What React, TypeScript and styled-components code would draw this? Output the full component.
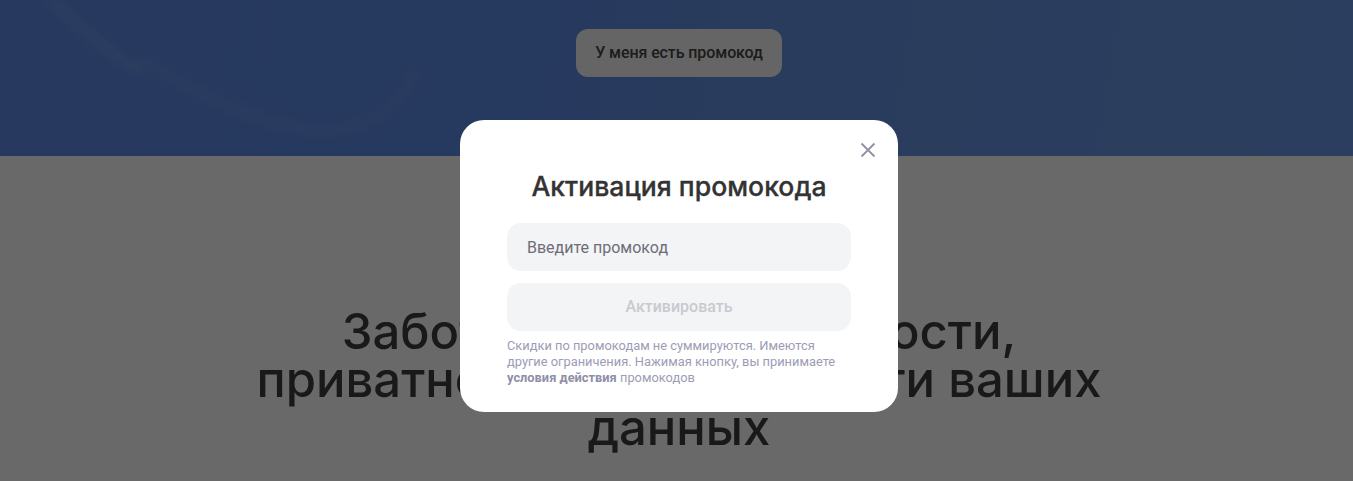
import styled, { createGlobalStyle } from "styled-components";

const GlobalStyle = createGlobalStyle`
  html, body {
    margin: 0;
    padding: 0;
    height: 100%;
    overflow: hidden;
    background: #ffffff;
  }
  * {
    box-sizing: border-box;
  }
`;

const Page = styled.div`
  position: relative;
  height: 481px;
  overflow: hidden;
  font-family: "Inter", "Noto Sans", sans-serif;
`;

const Hero = styled.section`
  position: relative;
  height: 156px;
  padding: 29px 0 0 5px;
  display: flex;
  justify-content: center;
  align-items: flex-start;
  background: linear-gradient(100deg, #5f8ce6 0%, #5e8ae4 40%, #6692e2 55%, #6b98e6 100%);
  overflow: hidden;
`;

const HeroWaves = styled.svg`
  position: absolute;
  left: 0;
  top: 0;
  width: 100%;
  height: 100%;
`;

const PromoButton = styled.button`
  position: relative;
  width: 206px;
  height: 48px;
  padding-bottom: 2px;
  border: 0;
  border-radius: 12px;
  background: #f6f6f6;
  color: #444444;
  font-family: "Roboto", sans-serif;
  font-size: 16px;
  font-weight: 500;
  letter-spacing: -0.1px;
`;

const Main = styled.main`
  display: flex;
  justify-content: center;
  padding: 152px 0 0 5px;
`;

const Heading = styled.h1`
  width: 900px;
  margin: 0;
  text-align: center;
  color: #3e3e3e;
  font-size: 49px;
  font-weight: 500;
  line-height: 48px;
`;

const Overlay = styled.div`
  position: absolute;
  inset: 0;
  background: rgba(0, 0, 0, 0.59);
`;

const Modal = styled.div`
  position: absolute;
  left: 460px;
  top: 120px;
  width: 438px;
  height: 292px;
  padding: 48px 47px 0;
  display: flex;
  flex-direction: column;
  border-radius: 24px;
  background: #ffffff;
`;

const CloseButton = styled.button`
  position: absolute;
  right: 21px;
  top: 21px;
  width: 18px;
  height: 18px;
  padding: 0;
  border: 0;
  background: none;
  color: #9191a5;
`;

const Title = styled.h2`
  margin: 0 0 19px;
  text-align: center;
  color: #333333;
  font-size: 26.6px;
  font-weight: 500;
  line-height: 36px;
  -webkit-text-stroke: 0.3px #333333;
`;

const PromoInput = styled.input`
  height: 48px;
  padding: 0 20px;
  border: 0;
  border-radius: 14px;
  outline: none;
  background: #f3f4f6;
  font-family: "Roboto", sans-serif;
  font-size: 16px;

  &::placeholder {
    color: #6d6d78;
    opacity: 1;
  }
`;

const ActivateButton = styled.button`
  height: 48px;
  margin-top: 12px;
  padding-bottom: 3px;
  border: 0;
  border-radius: 14px;
  background: #f3f4f6;
  color: #c8cacf;
  font-family: "Roboto", sans-serif;
  font-size: 16px;
  font-weight: 500;
`;

const Note = styled.p`
  margin: 7px 0 0;
  color: #9c9cb4;
  font-family: "Roboto", sans-serif;
  font-size: 12.85px;
  line-height: 16px;

  b {
    font-weight: 700;
    color: #8f8fa9;
  }
`;

const App = () => {
  return (
    <Page>
      <GlobalStyle />
      <Hero>
        <HeroWaves viewBox="0 0 1353 156" preserveAspectRatio="none">
          <defs>
            <filter id="soft" x="-20%" y="-20%" width="140%" height="140%">
              <feGaussianBlur stdDeviation="6" />
            </filter>
          </defs>
          <path
            d="M140 60 C210 100 290 145 360 125 C395 112 410 90 415 65"
            fill="none"
            stroke="#ffffff"
            strokeOpacity="0.05"
            strokeWidth="14"
            filter="url(#soft)"
          />
          <path
            d="M50 0 C80 25 100 50 140 70"
            fill="none"
            stroke="#ffffff"
            strokeOpacity="0.1"
            strokeWidth="9"
            filter="url(#soft)"
          />
          <path d="M92 28 C110 48 125 62 142 72" fill="none" stroke="#ffffff" strokeOpacity="0.1" />
        </HeroWaves>
        <PromoButton>У меня есть промокод</PromoButton>
      </Hero>
      <Main>
        <Heading>Заботимся о безопасности, приватности и сохранности ваших данных</Heading>
      </Main>
      <Overlay />
      <Modal>
        <CloseButton aria-label="Закрыть">
          <svg width="18" height="18" viewBox="0 0 18 18" fill="none">
            <path d="M2.5 2.5L15.5 15.5M15.5 2.5L2.5 15.5" stroke="currentColor" strokeWidth="1.8" />
          </svg>
        </CloseButton>
        <Title>Активация промокода</Title>
        <PromoInput placeholder="Введите промокод" />
        <ActivateButton>Активировать</ActivateButton>
        <Note>
          Скидки по промокодам не суммируются. Имеются другие ограничения. Нажимая кнопку, вы
          принимаете <b>условия действия</b> промокодов
        </Note>
      </Modal>
    </Page>
  );
};

export default App;
